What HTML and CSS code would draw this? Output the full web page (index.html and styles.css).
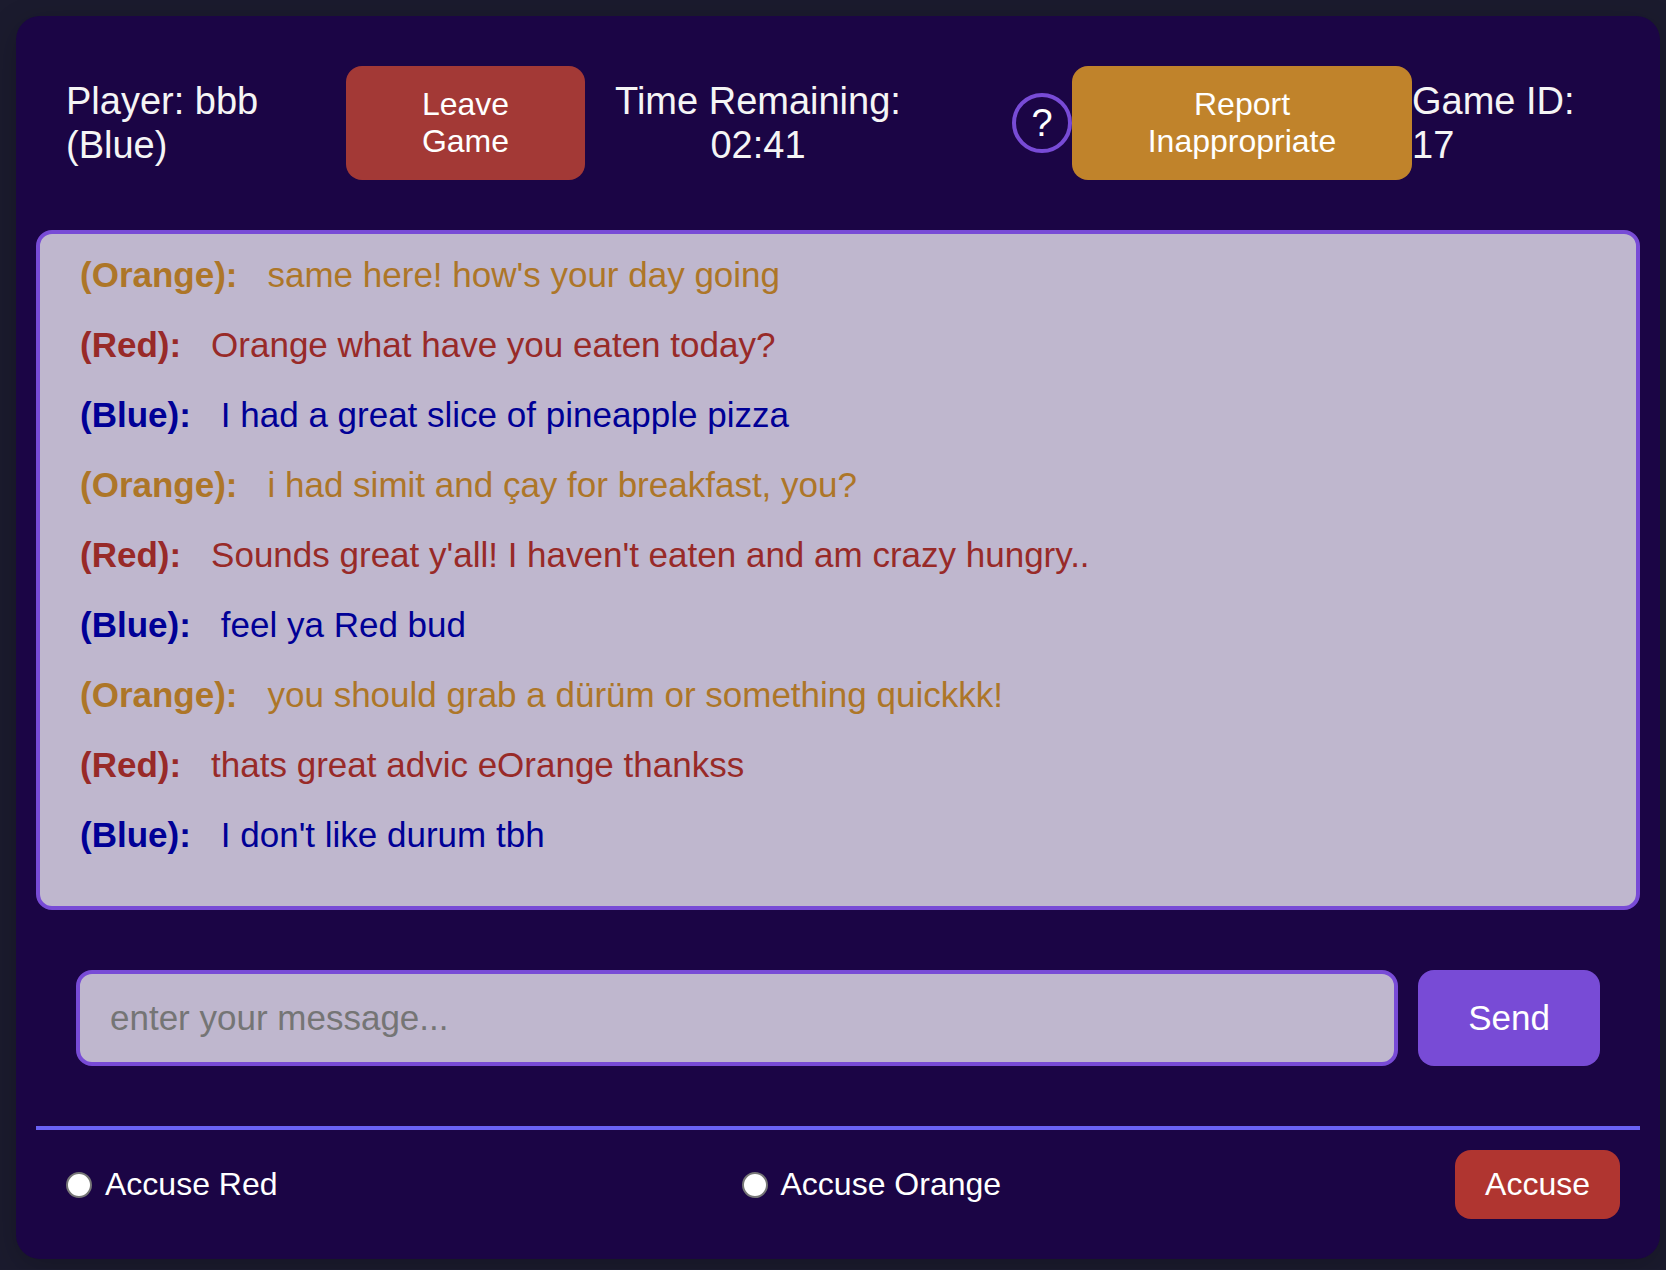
FILE: index.html
```html
<!DOCTYPE html>
<html lang="en">
<head>
<meta charset="utf-8">
<meta name="viewport" content="width=device-width, initial-scale=1">
<title>Game chat</title>
<link rel="stylesheet" href="styles.css">
</head>
<body>
<main class="game">
  <header class="game-header">
    <div class="info">Player: bbb (Blue)</div>
    <button class="btn btn-leave" type="button">Leave Game</button>
    <div class="info info-timer">Time Remaining: 02:41</div>
    <button class="btn-help" type="button" aria-label="Help">?</button>
    <button class="btn btn-report" type="button">Report Inappropriate</button>
    <div class="info">Game ID: 17</div>
  </header>

  <ul class="chat">
    <li class="message orange"><strong>(Orange):</strong><span>same here! how's your day going</span></li>
    <li class="message red"><strong>(Red):</strong><span>Orange what have you eaten today?</span></li>
    <li class="message blue"><strong>(Blue):</strong><span>I had a great slice of pineapple pizza</span></li>
    <li class="message orange"><strong>(Orange):</strong><span>i had simit and çay for breakfast, you?</span></li>
    <li class="message red"><strong>(Red):</strong><span>Sounds great y'all! I haven't eaten and am crazy hungry..</span></li>
    <li class="message blue"><strong>(Blue):</strong><span>feel ya Red bud</span></li>
    <li class="message orange"><strong>(Orange):</strong><span>you should grab a dürüm or something quickkk!</span></li>
    <li class="message red"><strong>(Red):</strong><span>thats great advic eOrange thankss</span></li>
    <li class="message blue"><strong>(Blue):</strong><span>I don't like durum tbh</span></li>
  </ul>

  <form class="composer">
    <input class="composer-input" type="text" placeholder="enter your message..." aria-label="Message">
    <button class="btn-send" type="button">Send</button>
  </form>

  <form class="accuse">
    <div class="choice">
      <input class="radio" type="radio" name="accused" id="accuse-red">
      <label for="accuse-red">Accuse Red</label>
    </div>
    <div class="choice">
      <input class="radio" type="radio" name="accused" id="accuse-orange">
      <label for="accuse-orange">Accuse Orange</label>
    </div>
    <button class="btn-accuse" type="button">Accuse</button>
  </form>
</main>
</body>
</html>
```
FILE: styles.css
```css
* {
  box-sizing: border-box;
}

body {
  margin: 0;
  padding: 16px 6px 10px 16px;
  background: #1b1b2e;
  color: #f5f5f5;
  font-family: "Liberation Sans", Arial, sans-serif;
}

button,
input {
  margin: 0;
  font-family: inherit;
}

button {
  border: 0;
  border-radius: 16px;
  color: #fff;
  cursor: pointer;
}

.game {
  padding: 20px;
  border-radius: 24px;
  background: #1b0545;
  box-shadow: 0 8px 32px rgba(0, 0, 0, 0.2);
}

.game-header {
  display: grid;
  grid-template-columns: 280fr 239fr 346fr 141fr 340fr 198fr;
  align-items: center;
  margin-bottom: 20px;
  padding: 30px;
}

.info {
  font-size: 38px;
  line-height: 44px;
}

.info-timer {
  text-align: center;
}

.btn {
  padding: 20px 50px;
  font-size: 32px;
  line-height: 37px;
}

.btn-leave {
  background: #a33936;
}

.btn-report {
  background: #c0832b;
}

.btn-help {
  justify-self: end;
  width: 60px;
  height: 60px;
  padding: 0;
  border: 4px solid #784bd6;
  border-radius: 50%;
  background: transparent;
  font-size: 38px;
  line-height: 44px;
}

.chat {
  margin: 0;
  padding: 21px 40px;
  border: 4px solid #784bd6;
  border-radius: 16px;
  background: #bfb7ce;
  list-style: none;
}

.message {
  display: flex;
  gap: 30px;
  margin-bottom: 30px;
  font-size: 35px;
  line-height: 40px;
}

.orange {
  color: #ad7628;
}

.red {
  color: #982a28;
}

.blue {
  color: #000096;
}

.composer {
  display: flex;
  gap: 20px;
  padding: 60px 40px;
}

.composer-input {
  flex: 1;
  min-width: 0;
  height: 96px;
  padding: 0 30px;
  border: 4px solid #784bd6;
  border-radius: 16px;
  background: #bfb7ce;
  color: #1b0545;
  font-size: 35px;
}

.composer-input::placeholder {
  color: #757575;
}

.btn-send {
  padding: 0 50px;
  background: #784bd6;
  font-size: 35px;
}

.accuse {
  display: flex;
  align-items: center;
  justify-content: space-between;
  padding: 20px;
  border-top: 4px solid #6a62f5;
  color: #fff;
  font-size: 32px;
  line-height: 37px;
}

.choice {
  display: flex;
  align-items: center;
  gap: 13px;
  padding-left: 10px;
}

.radio {
  width: 26px;
  height: 26px;
  appearance: none;
  border: 2px solid #767676;
  border-radius: 50%;
  background: #fff;
}

.radio:checked {
  background: radial-gradient(#784bd6 50%, #fff 55%);
}

.btn-accuse {
  padding: 16px 30px;
  background: #b03530;
  font-size: 32px;
  line-height: 37px;
}
```
